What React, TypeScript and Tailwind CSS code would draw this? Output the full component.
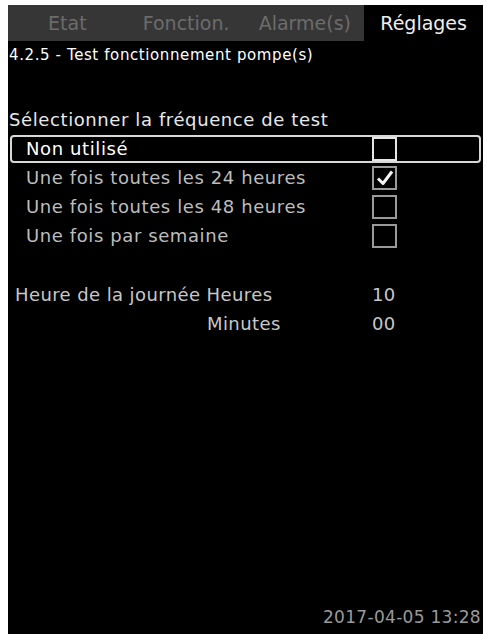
import React from "react";

const font = { fontFamily: '"DejaVu Sans", "Noto Sans", sans-serif' };

function Box({ checked, active }: { checked?: boolean; active?: boolean }) {
  return (
    <div
      className={`w-[25px] h-[24px] border-2 ${active ? "border-[#e6e6e6]" : "border-[#9a9a9a]"} flex items-center justify-center`}
    >
      {checked && (
        <svg width="20" height="20" viewBox="0 0 20 20">
          <path d="M3 10.5 L8 15.5 L17 3.5" stroke="#f2f2f2" strokeWidth="3" fill="none" strokeLinejoin="round" />
        </svg>
      )}
    </div>
  );
}

export default function App() {
  const rows = [
    { t: "Une fois toutes les 24 heures", c: true },
    { t: "Une fois toutes les 48 heures", c: false },
    { t: "Une fois par semaine", c: false },
  ];
  return (
    <div className="w-[487px] h-[634px] bg-white pl-[8px] pt-[5px] pr-[4px]" style={font}>
      <div className="w-[475px] h-[629px] bg-black flex flex-col">
        <div className="grid grid-cols-4 h-[36px] text-[19px] leading-none">
          <div className="bg-[#363636] text-[#6c6c6c] flex items-center justify-center">Etat</div>
          <div className="bg-[#363636] text-[#6c6c6c] flex items-center justify-center">Fonction.</div>
          <div className="bg-[#363636] text-[#6c6c6c] flex items-center justify-center">Alarme(s)</div>
          <div className="bg-black text-[#ededed] flex items-center justify-center">Réglages</div>
        </div>
        <div className="text-white text-[15px] tracking-[0.6px] leading-none pl-[1px] mt-[7px]">4.2.5 - Test fonctionnement pompe(s)</div>
        <div className="text-[#e8e8e8] text-[18px] tracking-[0.6px] leading-none pl-[1px] mt-[48px]">Sélectionner la fréquence de test</div>
        <div className="mt-[6px] mx-[2px] h-[28px] border-2 border-[#d8d8d8] rounded-[4px] flex items-center">
          <div className="text-white text-[18px] tracking-[0.6px] leading-none pl-[14px] w-[360px]">Non utilisé</div>
          <Box active />
        </div>
        {rows.map((r) => (
          <div key={r.t} className="mx-[2px] h-[29px] flex items-center border-2 border-transparent">
            <div className="text-[#bdbdbd] text-[18px] tracking-[0.6px] leading-none pl-[14px] w-[360px]">{r.t}</div>
            <Box checked={r.c} />
          </div>
        ))}
        <div className="mt-[30px] flex text-[#c8c8c8] text-[18px] tracking-[0.4px] leading-none h-[29px] items-center">
          <div className="w-[364px] pl-[7px]">Heure de la journée Heures</div>
          <div>10</div>
        </div>
        <div className="flex text-[#c8c8c8] text-[18px] tracking-[0.4px] leading-none h-[29px] items-center">
          <div className="w-[364px] pl-[199px]">Minutes</div>
          <div>00</div>
        </div>
        <div className="flex-1" />
        <div className="text-[#9a9a9a] text-[17px] tracking-[0.3px] leading-none text-right pr-[2px] pb-[8px]">2017-04-05 13:28</div>
      </div>
    </div>
  );
}
